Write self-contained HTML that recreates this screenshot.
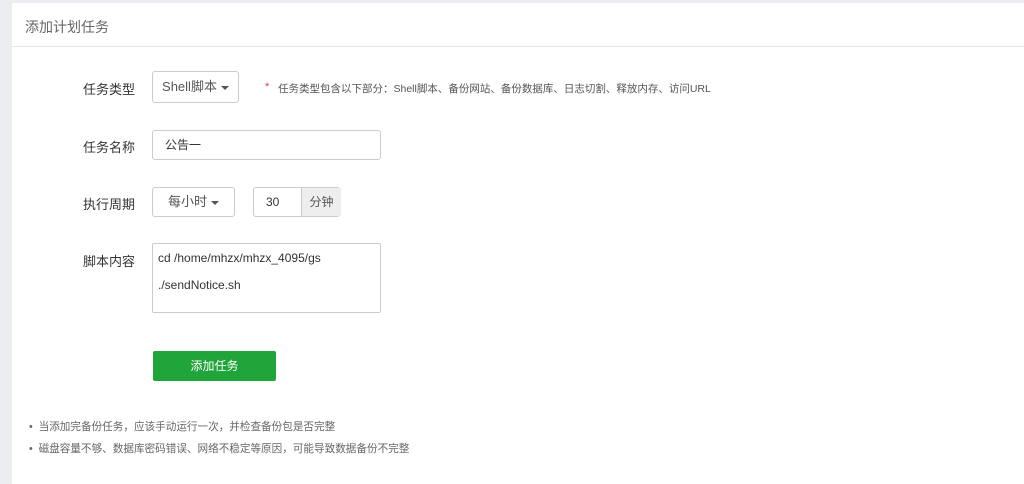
<!DOCTYPE html>
<html><head><meta charset="utf-8"><style>
body{margin:0;width:1024px;height:484px;background:#ebedf0;font-family:"Liberation Sans","Noto Sans CJK SC",sans-serif;position:relative;overflow:hidden}
.p{position:absolute;left:12px;top:3px;right:0;bottom:0;background:#fff}
.hd{position:absolute;left:0;right:0;top:0;height:43px;border-bottom:1px solid #e6e6e6}
.a{position:absolute;white-space:nowrap}
.lb{font-size:13px;color:#333;text-align:right;width:60px}
.bx{position:absolute;border:1px solid #ccc;border-radius:3px;box-sizing:border-box;font-size:13px;color:#555}
.car{display:inline-block;border-left:4px solid transparent;border-right:4px solid transparent;border-top:4px solid #555;vertical-align:middle;margin-left:4px}
</style></head><body>
<div class="p">
<div class="hd"><div class="a" style="left:13px;top:14px;font-size:14px;color:#666">添加计划任务</div></div>
</div>
<div class="a lb" style="left:75px;top:79px">任务类型</div>
<div class="bx" style="left:152px;top:71px;width:87px;height:32px;line-height:30px;text-align:center">Shell脚本<span class="car"></span></div>
<div class="a" style="left:265px;top:81px;font-size:11px;color:#e35;">*</div>
<div class="a" style="left:278px;top:81px;font-size:10.5px;color:#555">任务类型包含以下部分：Shell脚本、备份网站、备份数据库、日志切割、释放内存、访问URL</div>
<div class="a lb" style="left:75px;top:137px">任务名称</div>
<div class="bx" style="left:152px;top:130px;width:229px;height:30px;line-height:28px;padding-left:12px;font-size:12px;color:#333">公告一</div>
<div class="a lb" style="left:75px;top:194px">执行周期</div>
<div class="bx" style="left:152px;top:187px;width:83px;height:30px;line-height:28px;text-align:center">每小时<span class="car"></span></div>
<div class="bx" style="left:253px;top:187px;width:87px;height:30px;line-height:28px;font-size:12px;color:#333"><span style="padding-left:12px">30</span><span style="position:absolute;left:47px;top:0;bottom:0;width:39px;background:#eee;border-left:1px solid #ccc;text-align:center;color:#555">分钟</span></div>
<div class="a lb" style="left:75px;top:251px">脚本内容</div>
<div class="bx" style="left:152px;top:243px;width:229px;height:70px;border-radius:2px;padding:1px 0 0 5px;font-size:12px;color:#333;line-height:27px">cd /home/mhzx/mhzx_4095/gs<br>./sendNotice.sh</div>
<div class="a" style="left:153px;top:351px;width:123px;height:30px;background:#20a53a;border-radius:2px;color:#fff;font-size:12px;text-align:center;line-height:30px">添加任务</div>
<div class="a" style="left:29px;top:419px;font-size:10.6px;color:#666">•&nbsp; 当添加完备份任务，应该手动运行一次，并检查备份包是否完整</div>
<div class="a" style="left:29px;top:441px;font-size:10.6px;color:#666">•&nbsp; 磁盘容量不够、数据库密码错误、网络不稳定等原因，可能导致数据备份不完整</div>
</body></html>
